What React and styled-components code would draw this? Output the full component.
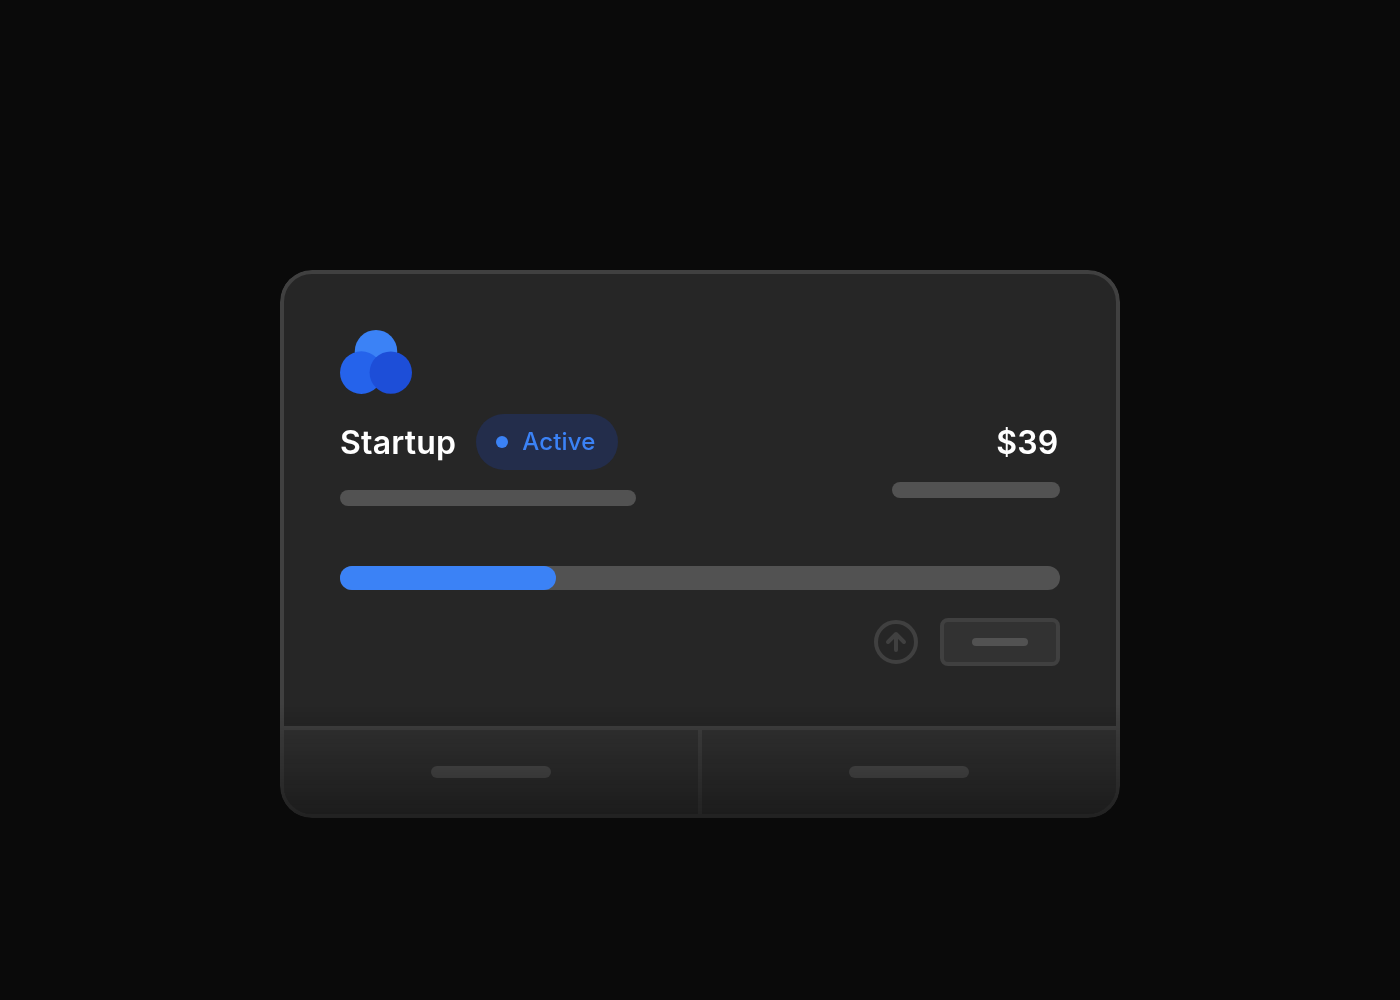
import React from "react";
import styled, { createGlobalStyle } from "styled-components";

const GlobalStyle = createGlobalStyle`
  *, *::before, *::after { box-sizing: border-box; }
  body {
    margin: 0;
    background: #0a0a0a;
    font-family: Inter, "Liberation Sans", sans-serif;
  }
`;

const Page = styled.main`
  display: flex;
  justify-content: center;
  align-items: flex-start;
  height: 1000px;
  padding-top: 270px;
`;

const Card = styled.section`
  display: flex;
  flex-direction: column;
  width: 840px;
  height: 548px;
  border: 4px solid #404040;
  border-radius: 32px;
  background: #262626;
  overflow: hidden;
  mask-image: linear-gradient(to bottom, #000 434px, transparent 638px);
  mask-origin: border-box;
  mask-clip: border-box;
`;

const Body = styled.div`
  flex: 1;
  display: flex;
  flex-direction: column;
  padding: 56px 56px 0;
`;

const Logo = styled.svg`
  display: block;
  width: 72px;
  height: 64px;
`;

const Summary = styled.div`
  display: flex;
  justify-content: space-between;
  align-items: flex-start;
  margin-top: 20px;
`;

const Column = styled.div`
  display: flex;
  flex-direction: column;
  align-items: ${(p) => (p.$end ? "flex-end" : "flex-start")};
  gap: ${(p) => p.$gap}px;
`;

const PlanRow = styled.div`
  display: flex;
  align-items: center;
  gap: 20px;
`;

const Title = styled.div`
  height: 56px;
  padding-top: 1px;
  padding-right: ${(p) => p.$inset || 0}px;
  font-size: 32px;
  line-height: 56px;
  font-weight: 600;
  letter-spacing: 0.2px;
  color: #fff;
`;

const Badge = styled.div`
  display: flex;
  align-items: center;
  gap: 14px;
  width: 142px;
  height: 56px;
  padding-left: 20px;
  border-radius: 28px;
  background: #232d4b;
  color: #3b82f6;
  font-size: 24px;
  line-height: 32px;
  font-weight: 450;
  letter-spacing: 0.15px;
`;

const Dot = styled.span`
  width: 12px;
  height: 12px;
  border-radius: 50%;
  background: #3b82f6;
`;

const Placeholder = styled.div`
  width: ${(p) => p.$width}px;
  height: ${(p) => p.$height}px;
  border-radius: ${(p) => p.$height / 2}px;
  background: #525252;
`;

const Track = styled.div`
  height: 24px;
  margin-top: 60px;
  border-radius: 12px;
  background: #525252;
`;

const Progress = styled.div`
  width: 30%;
  height: 100%;
  border-radius: 12px;
  background: #3b82f6;
`;

const Actions = styled.div`
  display: flex;
  justify-content: flex-end;
  align-items: center;
  gap: 20px;
  margin-top: 28px;
`;

const ArrowIcon = styled.svg`
  display: block;
  width: 48px;
  height: 48px;
`;

const Button = styled.div`
  display: flex;
  align-items: center;
  justify-content: center;
  width: 120px;
  height: 48px;
  border: 4px solid #404040;
  border-radius: 8px;
  background: #323232;
`;

const Footer = styled.footer`
  display: grid;
  grid-template-columns: 414px 1fr;
  column-gap: 4px;
  height: 88px;
  padding-top: 4px;
  background: #404040;
`;

const FooterCell = styled.div`
  display: flex;
  align-items: center;
  justify-content: center;
  background: #323232;
`;

export default function App() {
  return (
    <>
      <GlobalStyle />
      <Page>
        <Card>
          <Body>
            <Logo viewBox="0 0 72 64">
              <circle cx="36" cy="21.2" r="21.2" fill="#3b82f6" />
              <circle cx="21.3" cy="42.6" r="21.3" fill="#2563eb" />
              <circle cx="50.8" cy="42.6" r="21.2" fill="#1d4ed8" />
            </Logo>
            <Summary>
              <Column $gap={20}>
                <PlanRow>
                  <Title>Startup</Title>
                  <Badge>
                    <Dot />
                    Active
                  </Badge>
                </PlanRow>
                <Placeholder $width={296} $height={16} />
              </Column>
              <Column $end $gap={12}>
                <Title $inset={1.5}>$39</Title>
                <Placeholder $width={168} $height={16} />
              </Column>
            </Summary>
            <Track>
              <Progress />
            </Track>
            <Actions>
              <ArrowIcon
                viewBox="0 0 48 48"
                fill="none"
                stroke="#404040"
                strokeWidth="4"
                strokeLinecap="round"
                strokeLinejoin="round"
              >
                <circle cx="24" cy="24" r="20" />
                <path d="M24 32V16M16 24l8-8 8 8" />
              </ArrowIcon>
              <Button>
                <Placeholder $width={56} $height={8} />
              </Button>
            </Actions>
          </Body>
          <Footer>
            <FooterCell>
              <Placeholder $width={120} $height={12} />
            </FooterCell>
            <FooterCell>
              <Placeholder $width={120} $height={12} />
            </FooterCell>
          </Footer>
        </Card>
      </Page>
    </>
  );
}
